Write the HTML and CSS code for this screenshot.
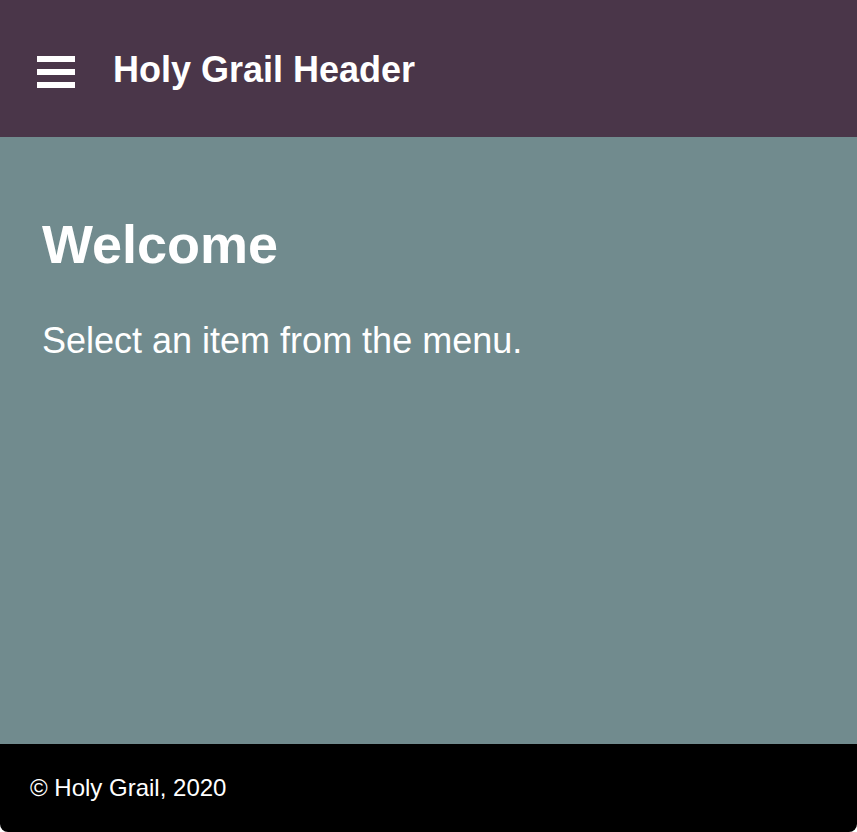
FILE: index.html
```html
<!DOCTYPE html>
<html lang="en">
<head>
<meta charset="utf-8">
<title>Holy Grail</title>
<link rel="stylesheet" href="styles.css">
</head>
<body>
<div class="page">
  <header class="header">
    <button class="menu-btn" aria-label="Menu">
      <svg width="38" height="32" viewBox="0 0 38 32" aria-hidden="true">
        <rect x="0" y="0" width="38" height="6" fill="#fff"/>
        <rect x="0" y="13" width="38" height="6" fill="#fff"/>
        <rect x="0" y="26" width="38" height="6" fill="#fff"/>
      </svg>
    </button>
    <div class="title">Holy Grail Header</div>
  </header>
  <main class="main">
    <h1 class="heading">Welcome</h1>
    <p class="lead">Select an item from the menu.</p>
  </main>
  <footer class="footer">© Holy Grail, 2020</footer>
</div>
</body>
</html>
```
FILE: styles.css
```css
html, body {
  margin: 0;
  padding: 0;
  height: 100%;
  background: #fff;
}
body {
  font-family: "Liberation Sans", Arial, Helvetica, sans-serif;
  color: #fff;
}
.page {
  display: flex;
  flex-direction: column;
  height: 832px;
  overflow: hidden;
  border-bottom-left-radius: 8px;
  border-bottom-right-radius: 8px;
}
.header {
  height: 137px;
  flex: 0 0 137px;
  background: #4a3649;
  display: flex;
  align-items: center;
  padding-left: 37px;
  gap: 38px;
}
.menu-btn {
  background: none;
  border: 0;
  padding: 0;
  margin-top: 7px;
  display: flex;
  cursor: pointer;
}
.title {
  font-size: 36px;
  font-weight: 700;
  margin-top: 2px;
}
.main {
  flex: 1;
  background: #718b8e;
  padding: 0 42px;
  overflow: hidden;
}
.heading {
  font-size: 54px;
  font-weight: 700;
  line-height: normal;
  margin: 76px 0 0;
}
.lead {
  font-size: 36px;
  line-height: normal;
  margin: 45px 0 0;
}
.footer {
  flex: 0 0 88px;
  height: 88px;
  background: #000;
  display: flex;
  align-items: center;
  padding-left: 30px;
  font-size: 24px;
}
```
